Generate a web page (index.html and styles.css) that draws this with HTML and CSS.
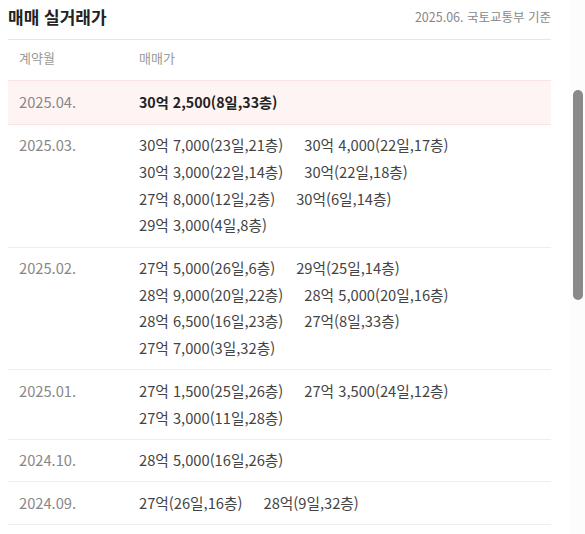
FILE: index.html
```html
<!DOCTYPE html>
<html lang="ko">
<head>
<meta charset="utf-8">
<link rel="stylesheet" href="styles.css">
</head>
<body>
<div class="page">
  <main class="panel">
    <header class="panel-head">
      <h2 class="title">매매 실거래가</h2>
      <span class="source">2025.06. 국토교통부 기준</span>
    </header>
    <div class="table">
      <div class="row head-row">
        <div class="col-date">계약월</div>
        <div class="col-price">매매가</div>
      </div>
      <div class="row row-hl">
        <div class="col-date">2025.04.</div>
        <div class="col-price"><span class="deal bold">30억 2,500(8일,33층)</span></div>
      </div>
      <div class="row">
        <div class="col-date">2025.03.</div>
        <div class="col-price">
          <span class="deal">30억 7,000(23일,21층)</span>
          <span class="deal">30억 4,000(22일,17층)</span>
          <span class="deal">30억 3,000(22일,14층)</span>
          <span class="deal">30억(22일,18층)</span>
          <span class="deal">27억 8,000(12일,2층)</span>
          <span class="deal">30억(6일,14층)</span>
          <span class="deal">29억 3,000(4일,8층)</span>
        </div>
      </div>
      <div class="row">
        <div class="col-date">2025.02.</div>
        <div class="col-price">
          <span class="deal">27억 5,000(26일,6층)</span>
          <span class="deal">29억(25일,14층)</span>
          <span class="deal">28억 9,000(20일,22층)</span>
          <span class="deal">28억 5,000(20일,16층)</span>
          <span class="deal">28억 6,500(16일,23층)</span>
          <span class="deal">27억(8일,33층)</span>
          <span class="deal">27억 7,000(3일,32층)</span>
        </div>
      </div>
      <div class="row">
        <div class="col-date">2025.01.</div>
        <div class="col-price">
          <span class="deal">27억 1,500(25일,26층)</span>
          <span class="deal">27억 3,500(24일,12층)</span>
          <span class="deal">27억 3,000(11일,28층)</span>
        </div>
      </div>
      <div class="row">
        <div class="col-date">2024.10.</div>
        <div class="col-price">
          <span class="deal">28억 5,000(16일,26층)</span>
        </div>
      </div>
      <div class="row">
        <div class="col-date">2024.09.</div>
        <div class="col-price">
          <span class="deal">27억(26일,16층)</span>
          <span class="deal">28억(9일,32층)</span>
        </div>
      </div>
    </div>
  </main>
  <div class="scroll-track"><div class="scroll-thumb"></div></div>
</div>
</body>
</html>
```
FILE: styles.css
```css
* { box-sizing: border-box; }
html, body {
  margin: 0;
  padding: 0;
  background: #fff;
  overflow: hidden;
}
body {
  font-family: "Noto Sans CJK KR", "Noto Sans", sans-serif;
  color: #444;
}
.page {
  display: flex;
  height: 534px;
}
.panel {
  flex: 1;
  padding: 0 19px 0 8px;
}
.panel-head {
  display: flex;
  justify-content: space-between;
  align-items: center;
  height: 40px;
  border-bottom: 1px solid #e6e6e6;
}
.title {
  margin: 0;
  font-size: 17px;
  font-weight: 700;
  color: #222;
  position: relative;
  top: -3px;
}
.source {
  font-size: 12.5px;
  color: #888;
  position: relative;
  top: -3px;
}
.row {
  display: flex;
  padding: 7.5px 0 7.5px 11px;
  border-bottom: 1px solid #eeeeee;
  font-size: 14.7px;
  line-height: 26.7px;
}
.head-row {
  height: 41px;
  padding-top: 5px;
  padding-bottom: 0;
  font-size: 13px;
  color: #999;
  border-bottom: 1px solid #fbe3e3;
}
.row-hl {
  background: #fff4f4;
  border-bottom: 1px solid #fbe3e3;
  padding-bottom: 8.5px;
}
.col-date {
  width: 120px;
  flex-shrink: 0;
  color: #888;
}
.col-price {
  flex: 1;
  display: flex;
  flex-wrap: wrap;
}
.head-row .col-date,
.head-row .col-price { color: #999; }
.deal { white-space: nowrap; color: #444; margin-right: 21px; }
.deal.bold { font-weight: 700; color: #222; font-size: 14.2px; }
.scroll-track {
  width: 15px;
  flex-shrink: 0;
  background: #fcfcfc;
  padding: 90px 2px 0 3px;
}
.scroll-thumb {
  height: 210px;
  border-radius: 5px;
  background: #8a8a8a;
}
```
